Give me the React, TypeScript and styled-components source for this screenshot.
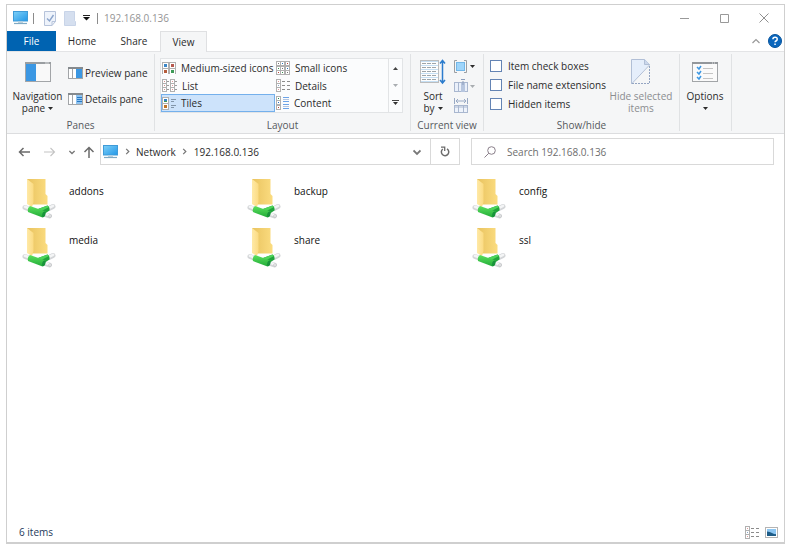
import React from "react";
import styled, { createGlobalStyle, css } from "styled-components";

const GlobalStyle = createGlobalStyle`
  *, *::before, *::after { box-sizing: border-box; }
  body { margin: 0; background: #fff; }
  body, button, input {
    font-family: "Open Sans", "Noto Sans", sans-serif;
    font-size: 10px;
    line-height: 12px;
    color: #2b2b2b;
  }
  button { border: 0; padding: 0; margin: 0; background: none; }
  svg { display: block; flex: none; }
`;

const Page = styled.div`
  display: flex;
  min-height: 100vh;
  padding: 4px 4px 4px 6px;
`;

const Window = styled.main`
  display: flex;
  flex-direction: column;
  flex: 1;
  min-width: 0;
  border: 1px solid #cfcfcf;
  border-bottom-width: 2px;
  background: #fff;
`;

const TitleBar = styled.header`
  display: flex;
  align-items: center;
  height: 26px;
  padding-left: 6px;
`;

const QuickButton = styled.button<{ $w: number }>`
  display: flex;
  justify-content: center;
  align-items: center;
  width: ${(p) => p.$w}px;
  height: 20px;
`;

const Rule = styled.span`
  width: 1px;
  height: 11px;
  margin: 0 6px 0 5px;
  background: #8c8c8c;
`;

const Title = styled.h1`
  flex: 1;
  margin: 0;
  font-size: 10px;
  font-weight: 400;
  color: #949494;
`;

const CaptionButton = styled.button`
  display: flex;
  justify-content: center;
  align-items: center;
  width: 40px;
  height: 24px;
`;

const TabBar = styled.nav`
  display: flex;
  height: 21px;
  border-bottom: 1px solid #e3e4e6;
`;

const Tab = styled.button<{ $kind?: "file" | "active" }>`
  width: 52px;
  height: 20px;
  font-weight: 500;
  ${(p) =>
    p.$kind === "file" &&
    css`
      width: 49px;
      background: #0063b1;
      color: #fff;
    `}
  ${(p) =>
    p.$kind === "active" &&
    css`
      width: 47px;
      height: 21px;
      background: #f5f6f7;
      border: 1px solid #dfe0e2;
      border-bottom: 0;
    `}
`;

const TabTools = styled.div`
  display: flex;
  align-items: center;
  gap: 8px;
  margin-left: auto;
  padding-right: 2px;
`;

const Ribbon = styled.section`
  display: flex;
  padding: 2px 0;
  background: #f5f6f7;
  border-bottom: 1px solid #dcdddf;
`;

const Group = styled.div<{ $w: number }>`
  display: flex;
  flex-direction: column;
  width: ${(p) => p.$w}px;
  border-right: 1px solid #e0e2e4;
`;

const GroupBody = styled.div<{ $gap?: number; $pad?: number }>`
  display: flex;
  height: 65px;
  gap: ${(p) => p.$gap ?? 0}px;
  padding: 4px 0 0 ${(p) => p.$pad ?? 0}px;
`;

const GroupLabel = styled.div`
  height: 12px;
  text-align: center;
  color: #55595d;
`;

const BigButton = styled.button<{ $w: number; $muted?: boolean }>`
  display: flex;
  flex-direction: column;
  align-items: center;
  width: ${(p) => p.$w}px;
  height: 57px;
  white-space: nowrap;
  color: ${(p) => (p.$muted ? "#8b8d90" : "#2b2b2b")};
`;

const BigIcon = styled.span`
  display: flex;
  align-items: center;
  height: 28px;
  margin-bottom: 4px;
`;

const WithCaret = styled.span`
  display: flex;
  align-items: center;
  gap: 3px;
  min-height: 12px;
`;

const Stack = styled.div<{ $gap: number; $top?: number }>`
  display: flex;
  flex-direction: column;
  gap: ${(p) => p.$gap}px;
  padding-top: ${(p) => p.$top ?? 0}px;
`;

const SmallButton = styled.button`
  display: flex;
  align-items: center;
  gap: 2px;
  height: 14px;
  white-space: nowrap;
`;

const Gallery = styled.div`
  display: grid;
  grid-template-columns: 114px 113px 14px;
  grid-template-rows: 18px 17px 18px;
  height: 55px;
  border: 1px solid #e2e4e6;
  background: #fbfcfd;
`;

const GalleryItem = styled.button<{ $on?: boolean }>`
  display: flex;
  align-items: center;
  gap: 5px;
  padding-left: ${(p) => (p.$on ? 0 : 1)}px;
  white-space: nowrap;
  ${(p) =>
    p.$on &&
    css`
      background: #cde3fb;
      border: 1px solid #74b0ec;
    `}
`;

const GalleryScroll = styled.button`
  display: flex;
  align-items: center;
  justify-content: center;
  border-left: 1px solid #e2e4e6;
`;

const Check = styled.label`
  display: flex;
  align-items: center;
  gap: 6px;
  height: 12px;
  white-space: nowrap;
`;

const CheckBox = styled.input`
  appearance: none;
  width: 12px;
  height: 12px;
  margin: 0;
  border: 1px solid #6484b4;
  background: #fff;
`;

const NavBar = styled.div`
  display: flex;
  align-items: center;
  padding: 4px 10px 4px 6px;
`;

const NavButton = styled.button<{ $w: number }>`
  display: flex;
  align-items: center;
  justify-content: center;
  width: ${(p) => p.$w}px;
  height: 26px;
`;

const Address = styled.div`
  display: flex;
  align-items: center;
  flex: 356 1 0;
  height: 27px;
  margin: 0 11px 0 1px;
  padding-left: 2px;
  border: 1px solid #d9d9d9;
`;

const Crumb = styled.button`
  white-space: nowrap;
`;

const CrumbSep = styled.span`
  display: flex;
  justify-content: center;
  width: 18px;
`;

const Refresh = styled.button`
  display: flex;
  align-items: center;
  justify-content: center;
  width: 29px;
  height: 25px;
  border-left: 1px solid #d9d9d9;
`;

const DropButton = styled.button`
  display: flex;
  align-items: center;
  justify-content: center;
  width: 26px;
  height: 25px;
  margin-left: auto;
`;

const Search = styled.label`
  display: flex;
  align-items: center;
  gap: 11px;
  flex: 289 1 0;
  min-width: 0;
  height: 27px;
  padding-left: 12px;
  border: 1px solid #d9d9d9;
`;

const SearchInput = styled.input`
  flex: 1;
  min-width: 0;
  padding: 0;
  border: 0;
  outline: 0;
  background: transparent;
  &::placeholder { color: #6d6d6d; opacity: 1; }
`;

const Files = styled.div`
  display: grid;
  grid-template-columns: repeat(auto-fill, 225px);
  grid-auto-rows: 49px;
  align-content: start;
  flex: 1;
  padding: 9px 0 0 15px;
`;

const FileTile = styled.button`
  display: flex;
  align-items: flex-start;
  gap: 13px;
  text-align: left;
  color: #111;
`;

const FileName = styled.span`
  padding-top: 7px;
`;

const StatusBar = styled.footer`
  display: flex;
  align-items: center;
  height: 20px;
  padding: 0 6px 0 12px;
  color: #1e395b;
`;

const StatusCount = styled.span`
  flex: 1;
`;

const ViewButton = styled.button`
  margin-left: 6px;
`;

const Caret = ({ color = "#2b2b2b" }: { color?: string }) => (
  <svg width="5" height="3" viewBox="0 0 5 3"><path d="M0 0h5L2.500 3z" fill={color} /></svg>
);

const Monitor = () => (
  <svg width="15" height="14" viewBox="0 0 15 14">
    <defs>
      <linearGradient id="screen" x1="0" y1="0" x2="1" y2="1">
        <stop offset="0" stopColor="#7fd0f7" />
        <stop offset="1" stopColor="#2197e8" />
      </linearGradient>
    </defs>
    <rect x="0.500" y="0.500" width="14" height="9.500" fill="url(#screen)" stroke="#3f9bd8" />
    <path d="M5 10.500h5v1.500H5z" fill="#c3d3dd" />
    <path d="M1 12.500h13" stroke="#7fa9c4" strokeWidth="1.200" />
  </svg>
);

const PropertiesIcon = () => (
  <svg width="12" height="15" viewBox="0 0 12 15">
    <path d="M.5.5h11v10l-3.500 4H.5z" fill="#eef3fb" stroke="#b6c3da" />
    <path d="M8 14.500v-4h3.500" fill="none" stroke="#b6c3da" />
    <path d="M3 7.500l2.500 2.500L9.500 4" fill="none" stroke="#8ba4cb" strokeWidth="1.400" />
  </svg>
);

const NewFolderIcon = () => (
  <svg width="12" height="15" viewBox="0 0 12 15">
    <path d="M.5.5h10v9l1 1v4H.5z" fill="#d5dfef" stroke="#c8d4e8" />
  </svg>
);

const NavPaneIcon = () => (
  <svg width="26" height="20" viewBox="0 0 26 20">
    <rect x="0.500" y="0.500" width="25" height="19" fill="#f9f9f9" stroke="#a2a5a8" />
    <path d="M0 1h26" stroke="#9a9ea1" strokeWidth="2" />
    <path d="M1 2h10v17H1z" fill="#3b97e3" />
    <path d="M20 1h4" stroke="#d7d9da" />
  </svg>
);

const SidePaneIcon = ({ details }: { details?: boolean }) => (
  <svg width="15" height="12" viewBox="0 0 15 12">
    <rect x="0.500" y="0.500" width="14" height="11" fill="#fff" stroke="#a2a5a8" />
    <path d="M0 1h15" stroke="#858a8e" strokeWidth="2" />
    <path d="M4.500 2v9" stroke="#a2a5a8" />
    <path d="M8 2h6v9H8z" fill={details ? "#8fc3f0" : "#3b97e3"} />
    {details && <path d="M9 4.500h5M9 6.500h5M9 8.500h5" stroke="#2779c4" />}
  </svg>
);

const cells = (xs: number[], ys: number[], s: number, colors: string[]) =>
  ys.map((y, j) =>
    xs.map((x, i) => (
      <g key={`${x}-${y}`}>
        <rect x={x + 0.5} y={y + 0.5} width={s - 1} height={s - 1} fill="#fff" stroke="#b0b0b0" />
        <rect
          x={x + (s > 5 ? 2 : s / 2 - 0.5)}
          y={y + (s > 5 ? 2 : s / 2 - 0.5)}
          width={s > 5 ? s - 4 : 1}
          height={s > 5 ? s - 4 : 1}
          fill={colors[(i + j * xs.length) % colors.length]}
        />
      </g>
    ))
  );

const MediumIcon = () => (
  <svg width="14" height="12" viewBox="0 0 14 12">
    {cells([0, 7], [0, 6], 7, ["#3c87c8", "#b65a50", "#b55c3b", "#3d9a58"])}
  </svg>
);
const SmallIcon = () => (
  <svg width="14" height="15" viewBox="0 0 14 15">
    {cells([0, 4, 9], [0, 5, 9], 5, ["#777", "#2877bd", "#bd453b", "#32914b"])}
  </svg>
);
const ListIcon = () => (
  <svg width="15" height="13" viewBox="0 0 15 13">
    {cells([0, 8], [0, 4, 8], 5, ["#d48d8d", "#e09797"])}
    <path d="M5 2.500h2M5 6.500h2M5 10.500h2M13 2.500h2M13 6.500h2M13 10.500h2" stroke="#9a9a9a" />
  </svg>
);
const DetailsIcon = () => (
  <svg width="14" height="13" viewBox="0 0 14 13">
    {cells([0], [0, 4, 8], 5, ["#e09a9a", "#87a7c8"])}
    <path d="M6 2.500h3M11 2.500h3M6 6.500h3M11 6.500h3M6 10.500h3M11 10.500h3" stroke="#8b8b8b" />
  </svg>
);
const TilesIcon = () => (
  <svg width="14" height="13" viewBox="0 0 14 13">
    {cells([0], [0, 6], 7, ["#357fc4", "#c07428"])}
    <path d="M2 4.500h3" stroke="#3d9a58" />
    <path d="M9 2.500h5M9 4.500h3M9 8.500h5M9 10.500h3" stroke="#8296aa" />
  </svg>
);
const ContentIcon = () => (
  <svg width="13" height="14" viewBox="0 0 13 14">
    {cells([0], [0, 4, 9], 5, ["#228a48", "#256fc4", "#bd453b"])}
    <path d="M7 1.500h6M7 5.500h6M7 8.500h6M7 12.500h6" stroke="#6ca3e8" />
    <path d="M7 3.500h6M7 10.500h6" stroke="#b4c5df" />
  </svg>
);

const SortIcon = () => (
  <svg width="26" height="26" viewBox="0 0 26 26">
    <rect x="0.500" y="1.500" width="18" height="22" fill="#fdfdfd" stroke="#bcbcbc" />
    <path d="M1 2.500h17M1 6.500h17M1 10.500h17M1 14.500h17M1 18.500h17M1 22.500h17" stroke="#c5dff4" />
    <path d="M2 4.500h15M2 8.500h15M2 12.500h15M2 16.500h15M2 20.500h15" stroke="#9da5aa" strokeDasharray="4 1" />
    <path d="M22.500 2v21M20 4.500L22.500 1.500 25 4.500M20 21l2.500 3 2.500-3" stroke="#2c7ccd" strokeWidth="1.500" fill="none" />
  </svg>
);

const GroupByIcon = () => (
  <svg width="14" height="13" viewBox="0 0 14 13">
    <path d="M3 .5H.5v12H3M10 .5h2.500v12H10" stroke="#9b9fa3" fill="none" />
    <rect x="2.500" y="2.500" width="8" height="8" fill="#9ed5fb" stroke="#73b7e8" />
  </svg>
);
const AddColumnsIcon = () => (
  <svg width="14" height="14" viewBox="0 0 14 14">
    <rect x="0.500" y="3.500" width="13" height="9" fill="#eaf0fa" stroke="#a9b7cf" />
    <path d="M4.500 4v9" stroke="#a9b7cf" />
    <path d="M7 4h4v9H7z" fill="#b7c6df" />
    <path d="M9 2v4M7 .5h4" stroke="#8c9dbb" />
  </svg>
);
const FitColumnsIcon = () => (
  <svg width="14" height="16" viewBox="0 0 14 16">
    <path d="M.5 0v6M13.500 0v6M2 3h10M4 1L2 3l2 2M10 1l2 2-2 2" fill="none" stroke="#98a9c4" />
    <rect x="0.500" y="7.500" width="13" height="7" fill="#eef3fb" stroke="#a9b7cf" />
    <path d="M0 9h14M4.500 8v7M9.500 8v7" stroke="#a9b7cf" />
  </svg>
);

const HideIcon = () => (
  <svg width="20" height="26" viewBox="0 0 20 26">
    <path d="M.5 25V.5h14l4 4.500z" fill="#e5eefb" />
    <path d="M.5 25V.5h13l5 5V6L.5 25" fill="none" stroke="#b1bfd6" />
    <path d="M13.500.5v5h5" fill="#ccd8ec" stroke="#b1bfd6" />
    <path d="M18.500 7v17.500H1" fill="none" stroke="#94a5c2" strokeDasharray="2 1" />
  </svg>
);
const OptionsIcon = () => (
  <svg width="26" height="20" viewBox="0 0 26 20">
    <rect x="0.500" y="0.500" width="25" height="19" fill="#fafafa" stroke="#a2a5a8" />
    <path d="M0 1h26" stroke="#93979b" strokeWidth="2" />
    <path d="M5 5l2 2 2-3M5 10l2 2 2-3M5 15l2 2 2-3" fill="none" stroke="#3b97e3" strokeWidth="1.500" />
    <path d="M11 6.500h10M11 11.500h10M11 16.500h10" stroke="#c4c4c4" />
    <path d="M20 1h4" stroke="#e4e4e4" strokeDasharray="1 1" />
  </svg>
);

type ChevronProps = { dir: "up" | "down" | "right"; size?: number; color?: string; weight?: number };

const Chevron = ({ dir, size = 7, color = "#777", weight = 1.4 }: ChevronProps) => (
  <svg width={size} height={size} viewBox="0 0 8 8">
    <path
      d={dir === "up" ? "M.5 6L4 2.500 7.500 6" : dir === "down" ? "M.5 2.500L4 6l3.500-3.500" : "M2.500 1l3 3-3 3"}
      fill="none"
      stroke={color}
      strokeWidth={weight}
    />
  </svg>
);

const arrowPaths = {
  left: "M12 6H1.500M5.500 2l-4 4 4 4",
  right: "M0 6h10.500M6.500 2l4 4-4 4",
  up: "M6 12V1.500M1.500 6L6 1.500 10.500 6",
};

const Arrow = ({ dir, color }: { dir: keyof typeof arrowPaths; color: string }) => (
  <svg width="12" height="12" viewBox="0 0 12 12">
    <path d={arrowPaths[dir]} fill="none" stroke={color} strokeWidth={dir === "right" ? 1.1 : 1.5} />
  </svg>
);

const SharedFolder = () => (
  <svg width="34" height="41" viewBox="0 0 34 41">
    <defs>
      <linearGradient id="back" x1="0" x2="1"><stop offset="0" stopColor="#e9c35f" /><stop offset="1" stopColor="#fbdc80" /></linearGradient>
      <linearGradient id="flap" x1="0" x2="1"><stop offset="0" stopColor="#ffe9a6" /><stop offset="1" stopColor="#fbdb83" /></linearGradient>
      <linearGradient id="pipe" x1="0" y1="0" x2="0" y2="1"><stop offset="0" stopColor="#5be05e" /><stop offset="1" stopColor="#22ab38" /></linearGradient>
    </defs>
    <path d="M5 1h18.500v15l2 2v8.500H9z" fill="url(#back)" />
    <path d="M5 1l6.500 5v18l-1.500 5-5-3z" fill="url(#flap)" />
    <path d="M3 29.500L7 31M27 30.500l4-2M23 36.500l4.500 1.500" stroke="#d3d5d7" strokeWidth="5" strokeLinecap="round" />
    <path d="M3 28.800L7 30.300M27 29.800l4-2M23 35.800l4.500 1.500" stroke="#f4f5f6" strokeWidth="2.600" strokeLinecap="round" />
    <path d="M16 31l9.500-3.500q2.500 1.500 2 5l-7 4.500z" fill="#20a43b" />
    <path d="M16 31l9.500-3.500 1.500 1.500-8.500 4.500z" fill="#4ed45a" />
    <path d="M8 28q-3 2-2 6L20.500 39.500q3-1.500 3-6z" fill="url(#pipe)" />
    <ellipse cx="21.800" cy="36.400" rx="1.600" ry="3" transform="rotate(20 21.800 36.400)" fill="#18933b" />
    <circle cx="28" cy="38" r="1.300" fill="#fff" stroke="#bcbec0" strokeWidth="0.800" />
  </svg>
);

const files = ["addons", "backup", "config", "media", "share", "ssl"];
const checks = ["Item check boxes", "File name extensions", "Hidden items"];

export default function App() {
  return (
    <>
      <GlobalStyle />
      <Page>
        <Window>
          <TitleBar>
            <Monitor />
            <Rule />
            <QuickButton $w={20} aria-label="Properties"><PropertiesIcon /></QuickButton>
            <QuickButton $w={20} aria-label="New folder"><NewFolderIcon /></QuickButton>
            <QuickButton $w={12} aria-label="Customize toolbar">
              <svg width="7" height="6" viewBox="0 0 7 6"><path d="M0 .5h7" stroke="#222" /><path d="M0 2h7L3.500 5.500z" fill="#111" /></svg>
            </QuickButton>
            <Rule />
            <Title>192.168.0.136</Title>
            <CaptionButton aria-label="Minimize"><svg width="9" height="9" viewBox="0 0 9 9"><path d="M0 4.500h9" stroke="#999" /></svg></CaptionButton>
            <CaptionButton aria-label="Maximize"><svg width="9" height="9" viewBox="0 0 9 9"><path d="M.5.5h8v8h-8z" fill="none" stroke="#999" /></svg></CaptionButton>
            <CaptionButton aria-label="Close"><svg width="10" height="10" viewBox="0 0 10 10"><path d="M.5.5l9 9M9.500.5l-9 9" stroke="#909090" /></svg></CaptionButton>
          </TitleBar>
          <TabBar>
            <Tab $kind="file">File</Tab>
            <Tab>Home</Tab>
            <Tab>Share</Tab>
            <Tab $kind="active">View</Tab>
            <TabTools>
              <button aria-label="Collapse ribbon"><Chevron dir="up" size={8} color="#999" weight={1.2} /></button>
              <button aria-label="Help">
                <svg width="14" height="14" viewBox="0 0 14 14">
                  <circle cx="7" cy="7" r="6.500" fill="#0b67bd" stroke="#07539c" />
                  <path d="M4.900 5.300q0-2 2.200-2t2.100 1.900q0 1.100-1.200 1.800-.9.500-.9 1.300" fill="none" stroke="#fff" strokeWidth="1.500" />
                  <path d="M6.300 9.500h1.500V11H6.300z" fill="#fff" />
                </svg>
              </button>
            </TabTools>
          </TabBar>

          <Ribbon>
            <Group $w={148}>
              <GroupBody $pad={5} $gap={5}>
                <BigButton $w={51}>
                  <BigIcon><NavPaneIcon /></BigIcon>
                  Navigation
                  <WithCaret>pane<Caret /></WithCaret>
                </BigButton>
                <Stack $gap={12} $top={8}>
                  <SmallButton><SidePaneIcon />Preview pane</SmallButton>
                  <SmallButton><SidePaneIcon details />Details pane</SmallButton>
                </Stack>
              </GroupBody>
              <GroupLabel>Panes</GroupLabel>
            </Group>

            <Group $w={256}>
              <GroupBody $pad={5}>
                <Gallery>
                  <GalleryItem><MediumIcon />Medium-sized icons</GalleryItem>
                  <GalleryItem><SmallIcon />Small icons</GalleryItem>
                  <GalleryScroll aria-label="Scroll up">
                    <svg width="5" height="3" viewBox="0 0 5 3"><path d="M0 3h5L2.500 0z" fill="#444" /></svg>
                  </GalleryScroll>
                  <GalleryItem><ListIcon />List</GalleryItem>
                  <GalleryItem><DetailsIcon />Details</GalleryItem>
                  <GalleryScroll aria-label="Scroll down"><Caret color="#a9adb1" /></GalleryScroll>
                  <GalleryItem $on aria-pressed="true"><TilesIcon />Tiles</GalleryItem>
                  <GalleryItem><ContentIcon />Content</GalleryItem>
                  <GalleryScroll aria-label="More layouts">
                    <svg width="7" height="6" viewBox="0 0 7 6"><path d="M0 .5h7" stroke="#444" /><path d="M1 2h5L3.500 5z" fill="#333" /></svg>
                  </GalleryScroll>
                </Gallery>
              </GroupBody>
              <GroupLabel>Layout</GroupLabel>
            </Group>

            <Group $w={73}>
              <GroupBody $pad={7} $gap={6}>
                <BigButton $w={30}>
                  <BigIcon><SortIcon /></BigIcon>
                  Sort
                  <WithCaret>by<Caret /></WithCaret>
                </BigButton>
                <Stack $gap={6} $top={1}>
                  <SmallButton aria-label="Group by"><GroupByIcon /><Caret /></SmallButton>
                  <SmallButton aria-label="Add columns"><AddColumnsIcon /><Caret color="#a9adb1" /></SmallButton>
                  <SmallButton aria-label="Size all columns to fit"><FitColumnsIcon /></SmallButton>
                </Stack>
              </GroupBody>
              <GroupLabel>Current view</GroupLabel>
            </Group>

            <Group $w={196}>
              <GroupBody $pad={6} $gap={3}>
                <Stack $gap={7} $top={2}>
                  {checks.map((c) => (
                    <Check key={c}><CheckBox type="checkbox" />{c}</Check>
                  ))}
                </Stack>
                <BigButton $w={64} $muted>
                  <BigIcon><HideIcon /></BigIcon>
                  Hide selected
                  <span>items</span>
                </BigButton>
              </GroupBody>
              <GroupLabel>Show/hide</GroupLabel>
            </Group>

            <Group $w={52}>
              <GroupBody>
                <BigButton $w={50}>
                  <BigIcon><OptionsIcon /></BigIcon>
                  Options
                  <WithCaret><Caret /></WithCaret>
                </BigButton>
              </GroupBody>
            </Group>
          </Ribbon>

          <NavBar>
            <NavButton $w={22} aria-label="Back"><Arrow dir="left" color="#6b6b6b" /></NavButton>
            <NavButton $w={30} aria-label="Forward"><Arrow dir="right" color="#c4c4c4" /></NavButton>
            <NavButton $w={14} aria-label="Recent locations"><Chevron dir="down" size={6} weight={1.8} /></NavButton>
            <NavButton $w={20} aria-label="Up"><Arrow dir="up" color="#6b6b6b" /></NavButton>
            <Address>
              <Monitor />
              <CrumbSep><Chevron dir="right" /></CrumbSep>
              <Crumb>Network</Crumb>
              <CrumbSep><Chevron dir="right" /></CrumbSep>
              <Crumb>192.168.0.136</Crumb>
              <DropButton aria-label="Previous locations"><Chevron dir="down" size={8} weight={1.8} /></DropButton>
              <Refresh aria-label="Refresh">
                <svg width="10" height="11" viewBox="0 0 10 11">
                  <path d="M7 2.800A3.700 3.700 0 1 1 2.800 3" fill="none" stroke="#6b6b6b" strokeWidth="1.500" />
                  <path d="M1 1.200h3.700V5" fill="none" stroke="#6b6b6b" strokeWidth="1.300" />
                </svg>
              </Refresh>
            </Address>
            <Search>
              <svg width="12" height="12" viewBox="0 0 12 12">
                <circle cx="7.500" cy="4.500" r="3.800" fill="none" stroke="#8a7f8a" />
                <path d="M4.800 7.200L.5 11.500" stroke="#8a7f8a" />
              </svg>
              <SearchInput aria-label="Search" placeholder="Search 192.168.0.136" />
            </Search>
          </NavBar>

          <Files>
            {files.map((name) => (
              <FileTile key={name}><SharedFolder /><FileName>{name}</FileName></FileTile>
            ))}
          </Files>

          <StatusBar>
            <StatusCount>6 items</StatusCount>
            <ViewButton aria-label="Details view"><DetailsIcon /></ViewButton>
            <ViewButton aria-label="Large icons view">
              <svg width="13" height="11" viewBox="0 0 13 11">
                <rect x="0.500" y="0.500" width="12" height="10" fill="#fff" stroke="#b4b4b4" />
                <path d="M2 2h9v7H2z" fill="#8cc6f2" />
                <path d="M2 4.500q3 0 5 1.500t4 1v2H2z" fill="#1d5c87" />
              </svg>
            </ViewButton>
          </StatusBar>
        </Window>
      </Page>
    </>
  );
}
